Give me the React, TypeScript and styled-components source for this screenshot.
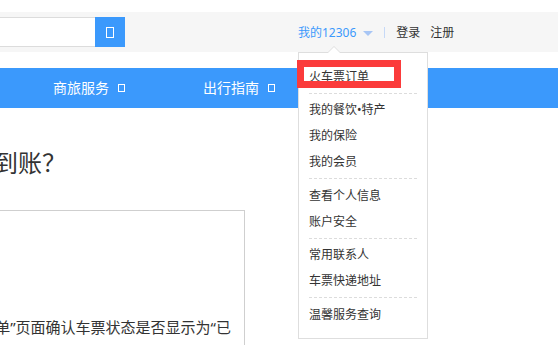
import styled, { createGlobalStyle } from "styled-components";

const GlobalStyle = createGlobalStyle`
  html, body {
    margin: 0;
    padding: 0;
    background: #fff;
  }
  body {
    font-family: "Noto Sans", "Noto Sans CJK SC", sans-serif;
    color: #333;
  }
`;

const BLUE = "#3b99fc";

const Page = styled.div`
  width: 558px;
  height: 345px;
  overflow: hidden;
  padding-top: 12px;
  box-sizing: border-box;
`;

const Header = {
  Top: styled.div`
    align-items: center;
    background: #f6f6f6;
    display: flex;
    height: 40px;
  `,
  Nav: styled.nav`
    align-items: center;
    background: ${BLUE};
    display: flex;
    gap: 78px;
    height: 40px;
    margin-top: 16px;
    padding-left: 53px;
  `,
};

const Search = {
  Input: styled.input`
    border: 1px solid #dcdcdc;
    border-right: none;
    box-sizing: border-box;
    height: 30px;
    margin: 0 0 0 -200px;
    outline: none;
    width: 295px;
  `,
  Button: styled.button`
    align-items: center;
    background: ${BLUE};
    border: none;
    display: flex;
    height: 30px;
    justify-content: center;
    padding: 0;
    width: 30px;
  `,
};

interface GlyphProps {
  $w: number;
  $h: number;
}

/* icon-font glyphs that never loaded: an empty box */
const MissingGlyph = styled.span<GlyphProps>`
  border: 1px solid #fff;
  box-sizing: border-box;
  display: inline-block;
  height: ${({ $h }) => $h}px;
  width: ${({ $w }) => $w}px;
`;

const NavItem = styled.a`
  align-items: center;
  color: #fff;
  display: flex;
  font-size: 14px;
  gap: 9px;
  line-height: 20px;
`;

const User = {
  Menu: styled.div`
    align-items: center;
    align-self: stretch;
    display: flex;
    font-size: 12px;
    margin-left: 173px;
    position: relative;
  `,
  Name: styled.a`
    color: ${BLUE};
  `,
  Arrow: styled.span`
    border-left: 5px solid transparent;
    border-right: 5px solid transparent;
    border-top: 5px solid #a8c6f5;
    height: 0;
    margin: 2px 0 0 7px;
    width: 0;
  `,
  Divider: styled.span`
    background: #c6d9f7;
    height: 11px;
    margin: 0 11px 0 11px;
    width: 1px;
  `,
  Link: styled.a`
    color: #333;
    margin-right: 10px;
  `,
};

const Dropdown = {
  Panel: styled.div`
    background: #fff;
    border: 1px solid #dedede;
    box-sizing: border-box;
    left: 0;
    padding: 7px 0 7px;
    position: absolute;
    top: 100%;
    width: 130px;
    z-index: 10;

    &::before,
    &::after {
      border-left: 7px solid transparent;
      border-right: 7px solid transparent;
      content: "";
      height: 0;
      left: 28px;
      position: absolute;
      width: 0;
    }
    &::before {
      border-bottom: 7px solid #dedede;
      top: -7px;
    }
    &::after {
      border-bottom: 7px solid #fff;
      top: -6px;
    }
  `,
  Group: styled.ul`
    list-style: none;
    margin: 0 10px;
    padding: 3.5px 0 3px;

    & + & {
      border-top: 1px dashed #dcdcdc;
    }
  `,
  Item: styled.li`
    color: #333;
    font-size: 12px;
    line-height: 26px;
    white-space: nowrap;
  `,
  Highlight: styled.span`
    border: 7px solid #fb3b3b;
    box-sizing: border-box;
    height: 28px;
    left: -2px;
    position: absolute;
    top: 7px;
    width: 104px;
  `,
};

const Article = {
  Title: styled.h1`
    display: flex;
    font-size: 24px;
    font-weight: 400;
    justify-content: flex-end;
    line-height: 32px;
    margin: 39px 0 0;
    white-space: nowrap;
    width: 66px;
  `,
  Box: styled.div`
    border: 1px solid #cfcfcf;
    box-sizing: border-box;
    height: 200px;
    margin: 31px 0 0 -200px;
    padding: 104px 13px 0 0;
    width: 445px;
  `,
  Line: styled.p`
    display: flex;
    font-size: 15px;
    justify-content: flex-end;
    line-height: 24px;
    margin: 0;
    white-space: nowrap;
  `,
};

const MENU_GROUPS = [
  ["火车票订单"],
  ["我的餐饮•特产", "我的保险", "我的会员"],
  ["查看个人信息", "账户安全"],
  ["常用联系人", "车票快递地址"],
  ["温馨服务查询"],
];

export default function App() {
  return (
    <Page>
      <GlobalStyle />
      <Header.Top>
        <Search.Input type="text" />
        <Search.Button>
          <MissingGlyph $w={8} $h={11} />
        </Search.Button>
        <User.Menu>
          <User.Name>我的12306</User.Name>
          <User.Arrow />
          <User.Divider />
          <User.Link>登录</User.Link>
          <User.Link>注册</User.Link>
          <Dropdown.Panel>
            {MENU_GROUPS.map((group, index) => (
              <Dropdown.Group key={index}>
                {group.map((label) => (
                  <Dropdown.Item key={label}>{label}</Dropdown.Item>
                ))}
              </Dropdown.Group>
            ))}
            <Dropdown.Highlight />
          </Dropdown.Panel>
        </User.Menu>
      </Header.Top>
      <Header.Nav>
        <NavItem>
          商旅服务
          <MissingGlyph $w={7} $h={8} />
        </NavItem>
        <NavItem>
          出行指南
          <MissingGlyph $w={7} $h={8} />
        </NavItem>
      </Header.Nav>
      <Article.Title>退票后多久到账？</Article.Title>
      <Article.Box>
        <Article.Line>请在“火车票订单”页面确认车票状态是否显示为“已</Article.Line>
        <Article.Line>退票”。</Article.Line>
      </Article.Box>
    </Page>
  );
}
